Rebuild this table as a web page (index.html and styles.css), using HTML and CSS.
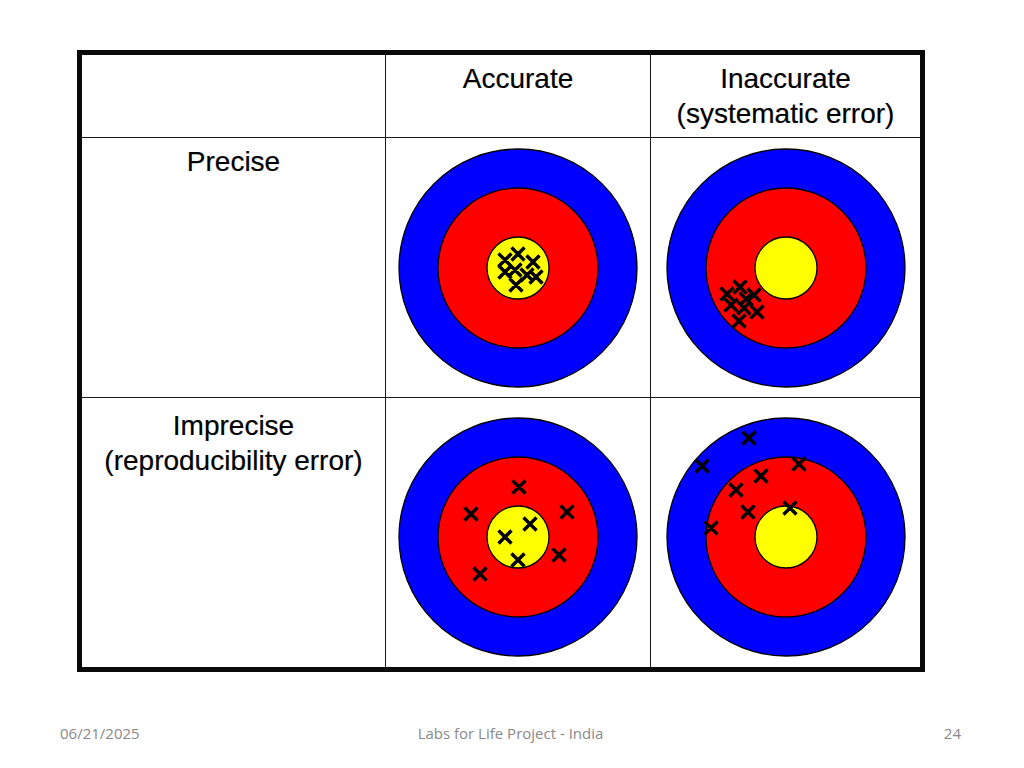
FILE: index.html
```html
<!DOCTYPE html>
<html lang="en">
<head>
<meta charset="utf-8">
<title>Accuracy and Precision</title>
<link rel="stylesheet" href="styles.css">
</head>
<body>
<div class="slide">
  <div class="chart">
    <div class="grid">
      <div class="cell head"></div>
      <div class="cell head">Accurate</div>
      <div class="cell head">Inaccurate<br>(systematic error)</div>

      <div class="cell label">Precise</div>
      <div class="cell target">
        <svg class="board" viewBox="-120 -120 240 240" width="240" height="240">
          <circle class="ring-blue" r="119"/>
          <circle class="ring-red" r="80"/>
          <circle class="ring-yellow" r="31"/>
          <path class="hits" d="M-6.5,-20.5l13,13m0,-13l-13,13 M-19.5,-14.5l13,13m0,-13l-13,13 M8.5,-12.5l13,13m0,-13l-13,13 M-19.5,-2.5l13,13m0,-13l-13,13 M-9.5,-4.5l13,13m0,-13l-13,13 M2.5,0.5l13,13m0,-13l-13,13 M11.5,2.5l13,13m0,-13l-13,13 M-8.5,10.5l13,13m0,-13l-13,13"/>
        </svg>
      </div>
      <div class="cell target">
        <svg class="board" viewBox="-120 -120 240 240" width="240" height="240">
          <circle class="ring-blue" r="119"/>
          <circle class="ring-red" r="80"/>
          <circle class="ring-yellow" r="31"/>
          <path class="hits" d="M-52.5,12.5l13,13m0,-13l-13,13 M-65.5,19.5l13,13m0,-13l-13,13 M-38.5,20.5l13,13m0,-13l-13,13 M-61.5,30.5l13,13m0,-13l-13,13 M-48.5,33.5l13,13m0,-13l-13,13 M-35.5,37.5l13,13m0,-13l-13,13 M-53.5,46.5l13,13m0,-13l-13,13 M-46.5,24.5l13,13m0,-13l-13,13"/>
        </svg>
      </div>

      <div class="cell label label-low">Imprecise<br>(reproducibility error)</div>
      <div class="cell target target-low">
        <svg class="board" viewBox="-120 -120 240 240" width="240" height="240">
          <circle class="ring-blue" r="119"/>
          <circle class="ring-red" r="80"/>
          <circle class="ring-yellow" r="31"/>
          <path class="hits" d="M-5.5,-56.5l13,13m0,-13l-13,13 M-53.5,-29.5l13,13m0,-13l-13,13 M42.5,-31.5l13,13m0,-13l-13,13 M5.5,-19.5l13,13m0,-13l-13,13 M-19.5,-6.5l13,13m0,-13l-13,13 M34.5,11.5l13,13m0,-13l-13,13 M-6.5,16.5l13,13m0,-13l-13,13 M-44.5,30.5l13,13m0,-13l-13,13"/>
        </svg>
      </div>
      <div class="cell target target-low">
        <svg class="board" viewBox="-120 -120 240 240" width="240" height="240">
          <circle class="ring-blue" r="119"/>
          <circle class="ring-red" r="80"/>
          <circle class="ring-yellow" r="31"/>
          <path class="hits" d="M-43.5,-105.5l13,13m0,-13l-13,13 M-90.5,-77.5l13,13m0,-13l-13,13 M6.5,-79.5l13,13m0,-13l-13,13 M-31.5,-67.5l13,13m0,-13l-13,13 M-56.5,-53.5l13,13m0,-13l-13,13 M-44.5,-31.5l13,13m0,-13l-13,13 M-2.5,-35.5l13,13m0,-13l-13,13 M-81.5,-15.5l13,13m0,-13l-13,13"/>
        </svg>
      </div>
    </div>
  </div>

  <footer class="footer">
    <span class="foot-date">06/21/2025</span>
    <span class="foot-title">Labs for Life Project - India</span>
    <span class="foot-page">24</span>
  </footer>
</div>
</body>
</html>
```

FILE: styles.css
```css
html, body {
  margin: 0;
  padding: 0;
  background: #ffffff;
}

.slide {
  width: 1024px;
  height: 768px;
  box-sizing: border-box;
  padding-top: 50px;
  display: flex;
  flex-direction: column;
  background: #ffffff;
}

.chart {
  margin-left: 77px;
  width: 848px;
  height: 622px;
  box-sizing: border-box;
  border: 5px solid #0a0a0a;
}

.grid {
  display: grid;
  grid-template-columns: 303px 264px 269px;
  grid-template-rows: 82px 259px 269px;
  gap: 1px;
  background: #1a1a1a;
  height: 100%;
}

.cell {
  background: #ffffff;
  font-family: "Liberation Sans", Arial, sans-serif;
  font-size: 28px;
  color: #000000;
  text-align: center;
  -webkit-text-stroke: 0.2px #000000;
}

.head {
  padding-top: 6px;
  line-height: 35px;
}

.label {
  padding-top: 7px;
  line-height: 34px;
}

.label-low {
  padding-top: 10px;
  line-height: 35px;
}

.target {
  display: flex;
  align-items: center;
  justify-content: center;
}

.target-low {
  padding-top: 8px;
  box-sizing: border-box;
}

.board {
  display: block;
}

.ring-blue {
  fill: #0000ff;
  stroke: #000000;
  stroke-width: 1.3;
}

.ring-red {
  fill: #ff0000;
  stroke: #000000;
  stroke-width: 1.3;
}

.ring-yellow {
  fill: #ffff00;
  stroke: #000000;
  stroke-width: 1.3;
}

.hits {
  fill: none;
  stroke: #000000;
  stroke-width: 3.4;
}

.footer {
  margin-top: 51px;
  display: grid;
  grid-template-columns: 1fr auto 1fr;
  padding: 0 63px 0 60px;
  font-family: "Open Sans", "Liberation Sans", sans-serif;
  font-size: 15px;
  line-height: 20px;
  color: #898989;
}

.foot-date {
  justify-self: start;
}

.foot-title {
  justify-self: center;
}

.foot-page {
  justify-self: end;
}
```
